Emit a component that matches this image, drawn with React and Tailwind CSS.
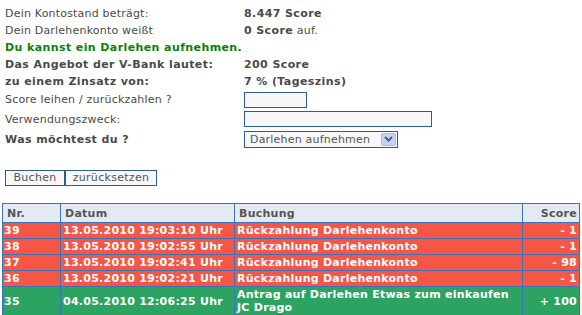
import React from 'react';

const ROWS = [
    { nr: 39, datum: '13.05.2010 19:03:10 Uhr', buchung: ['Rückzahlung Darlehenkonto'], score: '- 1', tone: 'red' },
    { nr: 38, datum: '13.05.2010 19:02:55 Uhr', buchung: ['Rückzahlung Darlehenkonto'], score: '- 1', tone: 'red' },
    { nr: 37, datum: '13.05.2010 19:02:41 Uhr', buchung: ['Rückzahlung Darlehenkonto'], score: '- 98', tone: 'red' },
    { nr: 36, datum: '13.05.2010 19:02:21 Uhr', buchung: ['Rückzahlung Darlehenkonto'], score: '- 1', tone: 'red' },
    { nr: 35, datum: '04.05.2010 12:06:25 Uhr', buchung: ['Antrag auf Darlehen Etwas zum einkaufen', 'JC Drago'], score: '+ 100', tone: 'green' },
];

const field = 'h-[16px] border border-[#2b5d94] bg-[#f7f7f7] outline-none text-[11px] px-1';
const row = 'h-[17px] flex items-center';
const strong = 'font-bold tracking-[0.4px]';

export default function App() {
    return (
        <div className="w-[582px] h-[315px] overflow-hidden bg-white text-[#4a4a4a] text-[11px] leading-[13px] tracking-[0.2px]" style={{ fontFamily: '"DejaVu Sans", Verdana, sans-serif' }}>
            <div className="grid grid-cols-[239px_1fr] pl-[5px] pt-[5px]">
                <div className={row}>Dein Kontostand beträgt:</div>
                <div className={`${row} ${strong}`}>8.447 Score</div>
                <div className={row}>Dein Darlehenkonto weißt</div>
                <div className={`${row} whitespace-pre`}><b className="tracking-[0.4px]">0 Score</b> auf.</div>
                <div className={`${row} col-span-2 ${strong} text-[#0a820a]`}>Du kannst ein Darlehen aufnehmen.</div>
                <div className={`${row} ${strong}`}>Das Angebot der V-Bank lautet:</div>
                <div className={`${row} ${strong}`}>200 Score</div>
                <div className={`${row} ${strong}`}>zu einem Zinsatz von:</div>
                <div className={`${row} ${strong}`}>7 % (Tageszins)</div>

                <div className="h-[19px] flex items-center">Score leihen / zurückzahlen ?</div>
                <div className="h-[19px] flex items-center"><input className={`${field} w-[63px]`} /></div>
                <div className="h-[20px] flex items-center">Verwendungszweck:</div>
                <div className="h-[20px] flex items-center"><input className={`${field} w-[188px]`} /></div>
                <div className={`h-[20px] flex items-center ${strong}`}>Was möchtest du ?</div>
                <div className="h-[20px] flex items-center">
                    <div className="h-[17px] w-[154px] border border-[#2b5d94] bg-[#f7f7f7] flex items-center justify-between pl-[5px] pr-[1px] text-[#555]">
                        <span>Darlehen aufnehmen</span>
                        <span className="w-[15px] h-[13px] bg-[#c3d3f4] border border-[#a9bde6] rounded-[2px] flex items-center justify-center">
                            <svg width="9" height="6" viewBox="0 0 9 6"><path d="M1 1l3.5 3.5L8 1" fill="none" stroke="#4d6185" strokeWidth="2" /></svg>
                        </span>
                    </div>
                </div>
            </div>

            <div className="flex pl-[5px] mt-[21px]">
                <button className="h-[16px] w-[60px] border border-[#2b5d94] bg-[#f7f7f7] text-[#555] text-[11px] leading-[12px] tracking-[0.3px]">Buchen</button>
                <button className="h-[16px] w-[92px] border border-[#2b5d94] bg-[#f7f7f7] text-[#555] text-[11px] leading-[12px] tracking-[0.3px]">zurücksetzen</button>
            </div>

            <table className="ml-[2px] mt-[17px] w-[578px] border-collapse text-[11px] leading-[13px] tracking-[0.25px]">
                <colgroup>
                    <col className="w-[58px]" />
                    <col className="w-[174px]" />
                    <col className="w-[288px]" />
                    <col />
                </colgroup>
                <thead>
                    <tr className="h-[19px] bg-[#e5e9f2] text-[#555]">
                        <th className="border border-[#3a73b8] text-left font-bold pl-[4px]">Nr.</th>
                        <th className="border border-[#3a73b8] text-left font-bold pl-[4px]">Datum</th>
                        <th className="border border-[#3a73b8] text-left font-bold pl-[4px]">Buchung</th>
                        <th className="border border-[#3a73b8] text-right font-bold pr-[2px]">Score</th>
                    </tr>
                </thead>
                <tbody>
                    {ROWS.map((r) => (
                        <tr key={r.nr} className={`font-bold text-white ${r.tone === 'red' ? 'bg-[#f55645] h-[16px]' : 'bg-[#2ca360] h-[29px]'}`}>
                            <td className="border border-[#3a73b8] pl-[1px]">{r.nr}</td>
                            <td className="border border-[#3a73b8] pl-[2px]">{r.datum}</td>
                            <td className="border border-[#3a73b8] pl-[2px]">
                                {r.buchung.map((line, i) => (
                                    <div key={i}>{line}</div>
                                ))}
                            </td>
                            <td className="border border-[#3a73b8] text-right pr-[2px]">{r.score}</td>
                        </tr>
                    ))}
                </tbody>
            </table>
        </div>
    );
}
